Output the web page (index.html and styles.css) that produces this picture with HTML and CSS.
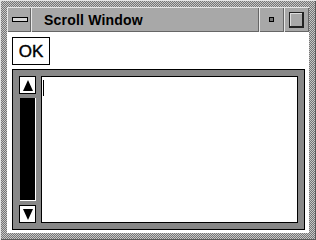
FILE: index.html
```html
<!DOCTYPE html>
<html lang="en">
<head>
  <meta charset="UTF-8">
  <title>Scroll Window</title>
  <link rel="stylesheet" href="styles.css">
</head>
<body>
  <div class="window">
    <!-- title bar -->
    <div class="titlebar">
      <div class="tb-btn menu"><span class="menu-bar"></span></div>
      <div class="title">Scroll Window</div>
      <div class="tb-btn min"><span class="dot"></span></div>
      <div class="tb-btn max"><span class="square"></span></div>
    </div>

    <!-- client area -->
    <div class="client">
      <div class="ok-btn">OK</div>
      <div class="scrolled">
        <div class="vscroll">
          <div class="arrow up"></div>
          <div class="trough"></div>
          <div class="arrow down"></div>
        </div>
        <div class="text-area"><span class="cursor"></span></div>
      </div>
    </div>
  </div>
</body>
</html>
```

FILE: styles.css
```css
* {
  box-sizing: border-box;
}

html, body {
  margin: 0;
  padding: 0;
  background: #fff;
  font-family: 'Liberation Sans', Arial, sans-serif;
}

.window {
  width: 316px;
  height: 240px;
  padding: 7px;
  display: flex;
  flex-direction: column;
  background: repeating-conic-gradient(#767676 0 25%, #c6c6c6 0 50%) 0 0 / 2px 2px;
  box-shadow: inset 1px 1px #e6e6e6, inset -1px -1px #5a5a5a;
}

.titlebar {
  height: 25px;
  display: flex;
  background: #a8a8a8;
}

.tb-btn,
.title {
  display: flex;
  align-items: center;
  justify-content: center;
  box-shadow: inset 1px 1px #e8e8e8, inset -1px -1px #666;
}

.menu {
  width: 24px;
}

.menu-bar {
  width: 16px;
  height: 5px;
  border: 1px solid #000;
  background: #d8d8d8;
  margin-left: 1px;
  margin-bottom: 1px;
}

.title {
  flex: 1;
  justify-content: flex-start;
  padding-left: 13px;
  font-size: 14px;
  font-weight: bold;
  color: #000;
  letter-spacing: 0.2px;
}

.min,
.max {
  width: 25px;
}

.dot {
  width: 5px;
  height: 5px;
  border: 1px solid #000;
  background: #777;
  margin-left: -1px;
}

.square {
  width: 15px;
  height: 16px;
  border: 1px solid #222;
  border-right-width: 2px;
  border-bottom-width: 2px;
  background: #a8a8a8;
  box-shadow: inset 1px 1px #ddd;
}

.client {
  flex: 1;
  background: #fff;
  padding: 5px 4px 3px 5px;
  display: flex;
  flex-direction: column;
  gap: 4px;
}

.ok-btn {
  width: 38px;
  height: 28px;
  border: 1px solid #000;
  display: flex;
  align-items: center;
  justify-content: center;
  font-size: 17px;
  color: #000;
  padding-top: 1px;
  -webkit-text-stroke: 0.4px #000;
}

.scrolled {
  flex: 1;
  border: 1px solid #000;
  background: #888;
  padding: 6px;
  display: flex;
  gap: 5px;
}

.vscroll {
  width: 17px;
  display: flex;
  flex-direction: column;
  gap: 4px;
}

.arrow {
  height: 18px;
  background: #fff;
  border: 1px solid #000;
  display: flex;
  align-items: center;
  justify-content: center;
}

.arrow::before {
  content: "";
  width: 0;
  height: 0;
  border-left: 5px solid transparent;
  border-right: 5px solid transparent;
}

.up::before {
  border-bottom: 11px solid #000;
}

.down::before {
  border-top: 11px solid #000;
}

.trough {
  flex: 1;
  background: #000;
  border-right: 1px solid #fff;
  border-bottom: 1px solid #fff;
  margin-left: 1px;
}

.text-area {
  flex: 1;
  background: #fff;
  border: 1px solid #000;
  padding: 3px 0 0 1px;
}

.cursor {
  display: block;
  width: 1px;
  height: 16px;
  background: #000;
}
```
